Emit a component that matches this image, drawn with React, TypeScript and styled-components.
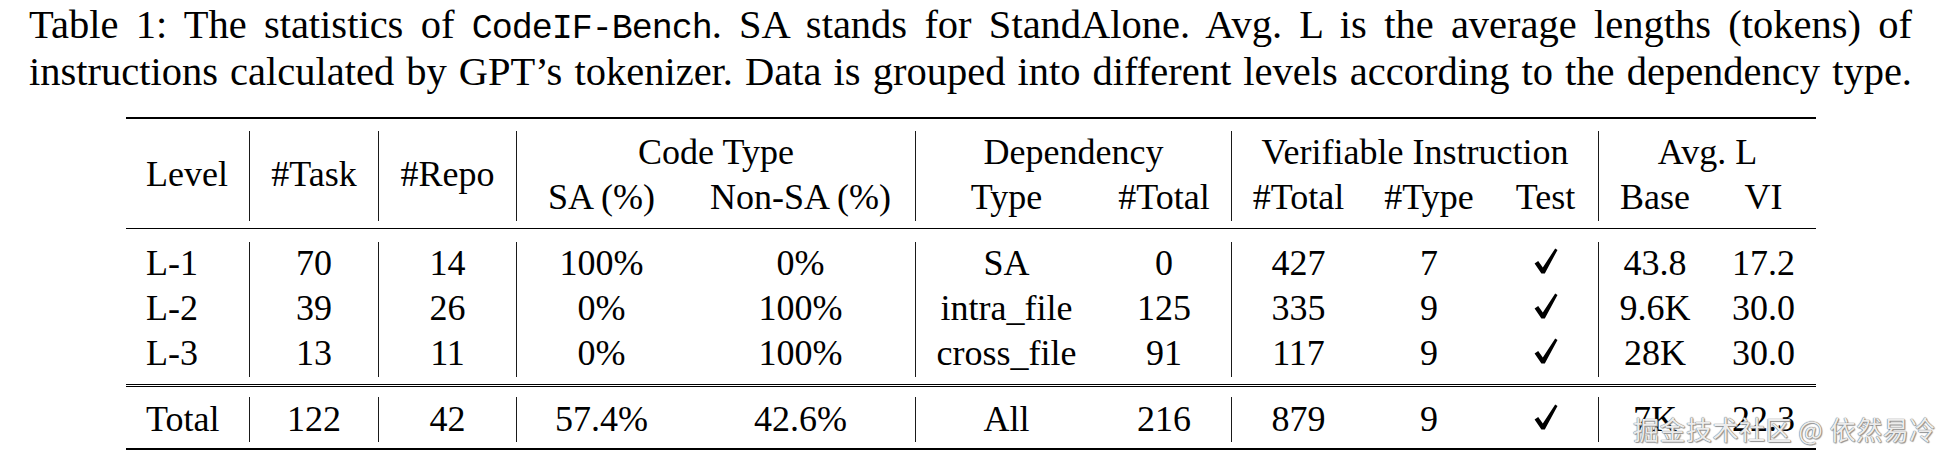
import React from 'react';
import styled, { createGlobalStyle } from 'styled-components';

const GlobalStyle = createGlobalStyle`
  html, body {
    margin: 0;
    padding: 0;
    background: #fff;
  }
  body {
    font-family: 'Liberation Serif', 'Times New Roman', serif;
    color: #000;
  }
`;

// column widths measured off the printed table (Level .. VI)
const COLUMNS = '123px 129px 138px 170px 229px 182px 134px 134px 128px 105px 113px 105px';
// columns that start a group get a vertical rule on their left edge
const DIVIDERS = [1, 2, 3, 5, 7, 10];

const CHECK = '✓';

const rows = [
  ['L-1', '70', '14', '100%', '0%', 'SA', '0', '427', '7', CHECK, '43.8', '17.2'],
  ['L-2', '39', '26', '0%', '100%', 'intra_file', '125', '335', '9', CHECK, '9.6K', '30.0'],
  ['L-3', '13', '11', '0%', '100%', 'cross_file', '91', '117', '9', CHECK, '28K', '30.0'],
];

const total = ['Total', '122', '42', '57.4%', '42.6%', 'All', '216', '879', '9', CHECK, '7K', '22.3'];

const Page = styled.div`
  position: relative;
  width: 1936px;
  height: 460px;
  overflow: hidden;
`;

const Caption = styled.div`
  padding: 1px 24px 0 29px;
  font-size: 40.5px;
  line-height: 47px;
`;

const CaptionLine = styled.div`
  text-align: justify;
  text-align-last: justify;
`;

const Code = styled.span`
  font-family: 'Liberation Mono', 'DejaVu Sans Mono', monospace;
  font-size: 35px;
  line-height: 1;
  letter-spacing: -1px;
`;

const Table = styled.div`
  margin: 22px 0 0 126px;
  width: 1690px;
  font-size: 36px;
  line-height: 45px;
`;

const Rule = styled.div<{ $weight: number; $above: number; $below: number; $double?: boolean }>`
  margin: ${(p) => p.$above}px 0 ${(p) => p.$below}px;
  border-top: ${(p) => p.$weight}px ${(p) => (p.$double ? 'double' : 'solid')} #000;
`;

const Section = styled.div<{ $lift?: number }>`
  display: grid;
  grid-template-columns: ${COLUMNS};
  grid-auto-rows: 45px;
  & > * {
    padding-bottom: ${(p) => p.$lift ?? 0}px;
  }
`;

const Cell = styled.div<{ $divider?: boolean; $left?: boolean; $span?: number; $tall?: boolean }>`
  grid-column: span ${(p) => p.$span ?? 1};
  grid-row: span ${(p) => (p.$tall ? 2 : 1)};
  display: flex;
  align-items: center;
  justify-content: ${(p) => (p.$left ? 'flex-start' : 'center')};
  padding-left: ${(p) => (p.$left ? '20px' : '0')};
  border-left: ${(p) => (p.$divider ? '1px solid #1a1a1a' : 'none')};
  white-space: nowrap;
`;

const CheckSvg = styled.svg`
  width: 24px;
  height: 26px;
  margin-bottom: 5px;
`;

const Watermark = styled.div`
  position: absolute;
  left: 1633px;
  top: 412px;
  font-family: 'Noto Sans CJK SC', sans-serif;
  font-size: 26px;
  line-height: 34px;
  color: #ececec;
  text-shadow: 0 0 1px #6f6f6f, 0 0 1px #6f6f6f, 1px 1px 1px #9a9a9a;
  white-space: nowrap;
  letter-spacing: 0.5px;
`;

const CheckMark = () => (
  <CheckSvg viewBox="0 0 24 26">
    <path d="M0.6 15.4 L4.2 13 L8.8 19.4 L21.2 0.5 L23.5 1.9 L10.8 25.5 L7.4 25.5 Z" fill="#000" />
  </CheckSvg>
);

const renderValue = (value: string) => (value === CHECK ? <CheckMark /> : value);

const BodyRow = ({ cells }: { cells: string[] }) => (
  <>
    {cells.map((value, i) => (
      <Cell key={i} $left={i === 0} $divider={DIVIDERS.includes(i)}>
        {renderValue(value)}
      </Cell>
    ))}
  </>
);

const Header = () => (
  <Section $lift={3}>
    <Cell $left $tall>
      Level
    </Cell>
    <Cell $tall $divider>
      #Task
    </Cell>
    <Cell $tall $divider>
      #Repo
    </Cell>
    <Cell $span={2} $divider>
      Code Type
    </Cell>
    <Cell $span={2} $divider>
      Dependency
    </Cell>
    <Cell $span={3} $divider>
      Verifiable Instruction
    </Cell>
    <Cell $span={2} $divider>
      Avg. L
    </Cell>

    <Cell $divider>SA (%)</Cell>
    <Cell>Non-SA (%)</Cell>
    <Cell $divider>Type</Cell>
    <Cell>#Total</Cell>
    <Cell $divider>#Total</Cell>
    <Cell>#Type</Cell>
    <Cell>Test</Cell>
    <Cell $divider>Base</Cell>
    <Cell>VI</Cell>
  </Section>
);

const App = () => (
  <Page>
    <GlobalStyle />
    <Caption>
      <CaptionLine>
        Table 1: The statistics of <Code>CodeIF-Bench</Code>. SA stands for StandAlone. Avg. L is the
        average lengths (tokens) of
      </CaptionLine>
      <CaptionLine>
        instructions calculated by GPT’s tokenizer. Data is grouped into different levels according to the
        dependency type.
      </CaptionLine>
    </Caption>

    <Table>
      <Rule $weight={2} $above={0} $below={12} />
      <Header />
      <Rule $weight={1} $above={7} $below={13} />
      <Section $lift={2}>
        {rows.map((cells) => (
          <BodyRow key={cells[0]} cells={cells} />
        ))}
      </Section>
      <Rule $weight={3} $double $above={7} $below={10} />
      <Section>
        <BodyRow cells={total} />
      </Section>
      <Rule $weight={2} $above={6} $below={0} />
    </Table>

    <Watermark>掘金技术社区 @ 依然易冷</Watermark>
  </Page>
);

export default App;
